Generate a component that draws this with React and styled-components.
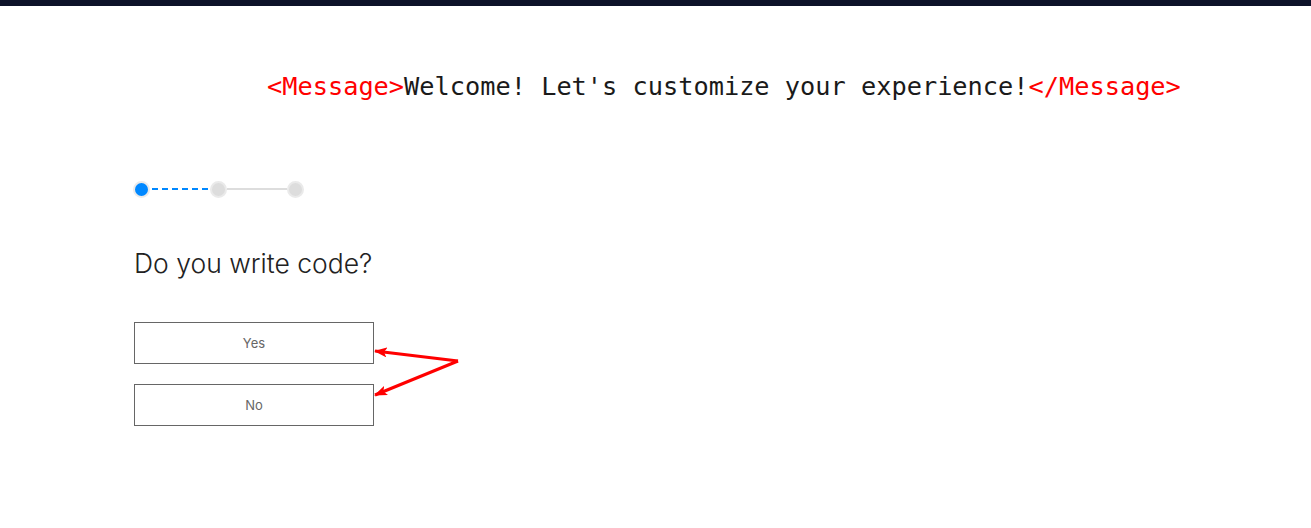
import React from "react";
import styled, { createGlobalStyle } from "styled-components";

const Global = createGlobalStyle`
  html, body { margin: 0; padding: 0; background: #fff; }
  body { font-family: "Open Sans", "Liberation Sans", sans-serif; }
`;

const Page = styled.div`
  position: relative;
  width: 1311px;
  height: 528px;
  overflow: hidden;
`;

const TopBar = styled.div`
  height: 6px;
  background: #0d1229;
`;

const MessageLine = styled.div`
  padding: 66px 0 0 267px;
  font-family: "DejaVu Sans Mono", "Liberation Mono", monospace;
  font-size: 25.3px;
  line-height: 30px;
  color: #1a1a1a;
  white-space: nowrap;
`;

const Tag = styled.span`
  color: #ff0000;
`;

const Content = styled.div`
  padding: 79px 0 0 133px;
`;

const Stepper = styled.div`
  display: flex;
  align-items: center;
  height: 16px;
`;

const Dot = styled.div`
  width: 13px;
  height: 13px;
  border-radius: 50%;
  border: 2px solid #eaeaea;
  background: ${(p) => (p.$active ? "#0088ff" : "#dddddd")};
  flex: none;
`;

const Connector = styled.div`
  width: ${(p) => (p.$dashed ? "56px" : "60px")};
  height: 0;
  border-top: 2px ${(p) => (p.$dashed ? "dashed #0088ff" : "solid #dddddd")};
  margin: 0 ${(p) => (p.$dashed ? "2px" : "0")};
`;

const Question = styled.h2`
  margin: 49px 0 0 1px;
  font-family: "Inter", "Open Sans", sans-serif;
  font-weight: 300;
  font-size: 26.5px;
  line-height: 34px;
  color: #222;
`;

const Options = styled.div`
  display: flex;
  flex-direction: column;
  gap: 20px;
  margin: 42px 0 0 1px;
  width: 240px;
`;

const Option = styled.button`
  box-sizing: border-box;
  width: 240px;
  height: 42px;
  background: #fff;
  border: 1px solid #666;
  border-radius: 0;
  font-family: "Inter", "Open Sans", sans-serif;
  font-size: 13px;
  color: #666;
  cursor: pointer;
  padding: 0;
`;

const Annotation = styled.svg`
  position: absolute;
  left: 0;
  top: 0;
  pointer-events: none;
`;

export default function App() {
  return (
    <Page>
      <Global />
      <TopBar />
      <MessageLine>
        <Tag>&lt;Message&gt;</Tag>Welcome! Let's customize your experience!<Tag>&lt;/Message&gt;</Tag>
      </MessageLine>
      <Content>
        <Stepper>
          <Dot $active />
          <Connector $dashed />
          <Dot />
          <Connector />
          <Dot />
        </Stepper>
        <Question>Do you write code?</Question>
        <Options>
          <Option>Yes</Option>
          <Option>No</Option>
        </Options>
      </Content>
      <Annotation width="1311" height="528" viewBox="0 0 1311 528">
        <defs>
          <marker id="ah" markerWidth="13" markerHeight="10" refX="12" refY="5" orient="auto" markerUnits="userSpaceOnUse">
            <path d="M0,0 L13,5 L0,10 L3,5 Z" fill="#ff0000" />
          </marker>
        </defs>
        <line x1="458" y1="361" x2="375" y2="351" stroke="#ff0000" strokeWidth="3" markerEnd="url(#ah)" />
        <line x1="458" y1="361" x2="375" y2="395" stroke="#ff0000" strokeWidth="3" markerEnd="url(#ah)" />
      </Annotation>
    </Page>
  );
}
